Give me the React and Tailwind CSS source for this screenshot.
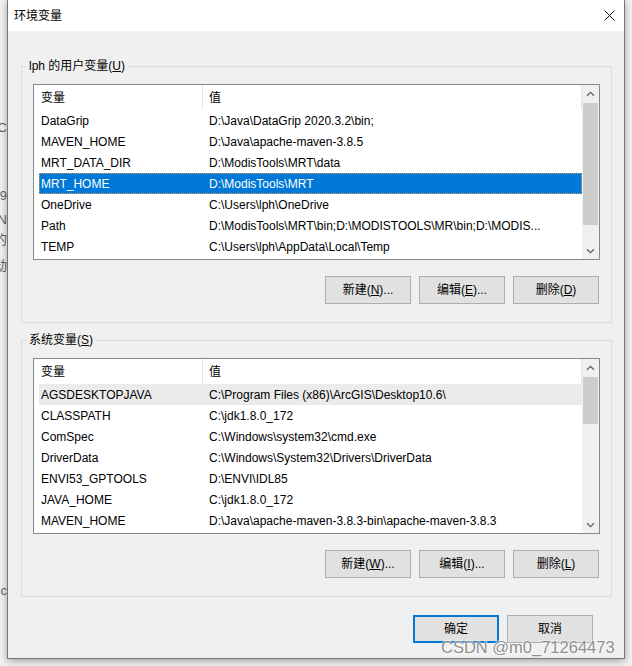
import React from "react";

const userVars = [
  ["DataGrip", "D:\\Java\\DataGrip 2020.3.2\\bin;"],
  ["MAVEN_HOME", "D:\\Java\\apache-maven-3.8.5"],
  ["MRT_DATA_DIR", "D:\\ModisTools\\MRT\\data"],
  ["MRT_HOME", "D:\\ModisTools\\MRT"],
  ["OneDrive", "C:\\Users\\lph\\OneDrive"],
  ["Path", "D:\\ModisTools\\MRT\\bin;D:\\MODISTOOLS\\MR\\bin;D:\\MODIS..."],
  ["TEMP", "C:\\Users\\lph\\AppData\\Local\\Temp"],
];

const systemVars = [
  ["AGSDESKTOPJAVA", "C:\\Program Files (x86)\\ArcGIS\\Desktop10.6\\"],
  ["CLASSPATH", "C:\\jdk1.8.0_172"],
  ["ComSpec", "C:\\Windows\\system32\\cmd.exe"],
  ["DriverData", "C:\\Windows\\System32\\Drivers\\DriverData"],
  ["ENVI53_GPTOOLS", "D:\\ENVI\\IDL85"],
  ["JAVA_HOME", "C:\\jdk1.8.0_172"],
  ["MAVEN_HOME", "D:\\Java\\apache-maven-3.8.3-bin\\apache-maven-3.8.3"],
];

function Chevron({ down }) {
  return (
    <svg width="9" height="6" viewBox="0 0 9 6">
      <path
        d={down ? "M1 1.2 L4.5 4.7 L8 1.2" : "M1 4.8 L4.5 1.3 L8 4.8"}
        stroke="#606060"
        strokeWidth="1.3"
        fill="none"
      />
    </svg>
  );
}

function VarList({ rows, selected, hover, thumb }) {
  return (
    <div className="w-[567px] h-[176px] border border-[#828790] bg-white flex">
      <div className="flex-1 flex flex-col">
        {/* header */}
        <div className="h-[25px] flex items-center">
          <div className="w-[169px] h-full pl-[7px] flex items-center border-r border-[#e5e5e5]">变量</div>
          <div className="flex-1 h-full pl-[6px] flex items-center border-r border-[#e5e5e5]">值</div>
        </div>
        {rows.map(([name, value], i) => {
          const isSel = i === selected;
          const isHover = i === hover;
          return (
            <div
              key={name + i}
              className={
                "ml-[5px] h-[21px] flex items-center whitespace-nowrap " +
                (isSel
                  ? "bg-[#0078d7] text-white border border-dotted border-[#d9a45a]"
                  : isHover
                  ? "bg-[#ebebeb]"
                  : "")
              }
            >
              <div className={isSel ? "w-[169px] pl-[1px]" : "w-[170px] pl-[2px]"}>{name}</div>
              <div className="flex-1 overflow-hidden">{value}</div>
            </div>
          );
        })}
      </div>
      {/* scrollbar */}
      <div className="w-[17px] bg-[#f0f0f0] flex flex-col">
        <div className="h-[17px] flex items-center justify-center">
          <Chevron />
        </div>
        <div className="flex-1 pt-[1px]">
          <div className="mx-[1px] bg-[#cdcdcd]" style={{ height: thumb }} />
        </div>
        <div className="h-[17px] flex items-center justify-center">
          <Chevron down />
        </div>
      </div>
    </div>
  );
}

function Btn({ children, primary }) {
  return (
    <button
      className={
        "w-[86px] h-[28px] bg-[#e1e1e1] text-[12px] text-black flex items-center justify-center " +
        (primary ? "border-2 border-[#0078d7]" : "border border-[#adadad]")
      }
    >
      {children}
    </button>
  );
}

function Group({ label, rows, selected, hover, thumb, buttons, className }) {
  return (
    <fieldset className={"ml-[13px] mr-[12px] border border-[#dcdcdc] " + className}>
      <legend className="ml-[4px] px-[3px] leading-[16px]">{label}</legend>
      <div className="px-[11px] pt-[10px] pb-[18px]">
        <VarList rows={rows} selected={selected} hover={hover} thumb={thumb} />
        <div className="mt-[16px] flex justify-end gap-[8px] pr-[1px]">
          {buttons.map((b, i) => (
            <Btn key={i}>{b}</Btn>
          ))}
        </div>
      </div>
    </fieldset>
  );
}

export default function App() {
  return (
    <div className="w-[632px] h-[666px] bg-[#f3f3f3] flex overflow-hidden relative text-[12px] text-black font-['Liberation_Sans','Noto_Sans_CJK_SC',sans-serif]">
      {/* edge of the window behind the dialog */}
      <div className="w-[7px] flex flex-col text-[#666] text-[13px] leading-[16px]">
        <div className="h-[120px]" />
        <div className="flex justify-end overflow-hidden">C</div>
        <div className="h-[52px]" />
        <div className="flex justify-end overflow-hidden whitespace-nowrap">09</div>
        <div className="h-[8px]" />
        <div className="flex justify-end overflow-hidden whitespace-nowrap">ZN</div>
        <div className="h-[4px]" />
        <div className="flex justify-end overflow-hidden whitespace-nowrap">的</div>
        <div className="h-[10px]" />
        <div className="flex justify-end overflow-hidden whitespace-nowrap">动</div>
        <div className="h-[309px]" />
        <div className="flex justify-end overflow-hidden">c</div>
      </div>

      {/* dialog window */}
      <div className="w-[618px] h-[659px] border-x border-b border-[#777] bg-[#f0f0f0] flex flex-col shadow-[0_2px_8px_rgba(0,0,0,0.35)]">
        <div className="h-[31px] bg-white flex items-center justify-between pl-[6px] pr-[9px]">
          <span>环境变量</span>
          <svg width="11" height="11" viewBox="0 0 11 11">
            <path d="M0.5 0.5 L10.5 10.5 M10.5 0.5 L0.5 10.5" stroke="#111" strokeWidth="1" />
          </svg>
        </div>

        <div className="h-[27px]" />
        <Group
          label={<>lph 的用户变量(<u>U</u>)</>}
          rows={userVars}
          selected={3}
          thumb={122}
          buttons={[
            <>新建(<u>N</u>)...</>,
            <>编辑(<u>E</u>)...</>,
            <>删除(<u>D</u>)</>,
          ]}
        />
        <Group
          className="mt-[9px]"
          label={<>系统变量(<u>S</u>)</>}
          rows={systemVars}
          hover={0}
          thumb={47}
          buttons={[
            <>新建(<u>W</u>)...</>,
            <>编辑(<u>I</u>)...</>,
            <>删除(<u>L</u>)</>,
          ]}
        />

        <div className="mt-[18px] mr-[31px] flex justify-end gap-[8px]">
          <Btn primary>确定</Btn>
          <Btn>取消</Btn>
        </div>
      </div>

      {/* watermark */}
      <div className="absolute left-[441px] top-[637px] text-[16.5px] leading-[20px] text-[#8f8f8f] font-['Liberation_Sans',sans-serif] [text-shadow:0_0_2px_#fff,0_0_2px_#fff]">
        CSDN @m0_71264473
      </div>
    </div>
  );
}
